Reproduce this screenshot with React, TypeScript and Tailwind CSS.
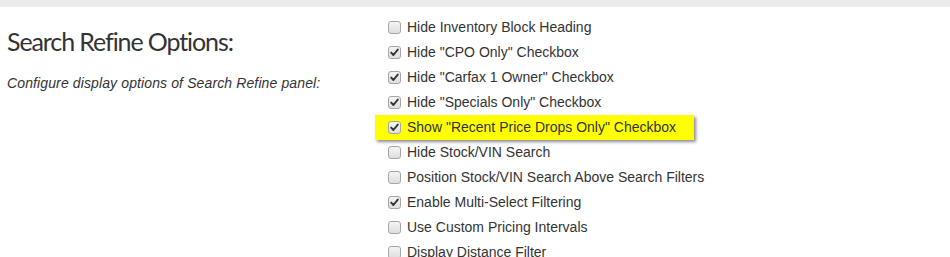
const options = [
  { label: "Hide Inventory Block Heading", checked: false },
  { label: 'Hide "CPO Only" Checkbox', checked: true },
  { label: 'Hide "Carfax 1 Owner" Checkbox', checked: true },
  { label: 'Hide "Specials Only" Checkbox', checked: true },
  { label: 'Show "Recent Price Drops Only" Checkbox', checked: true, highlight: true },
  { label: "Hide Stock/VIN Search", checked: false },
  { label: "Position Stock/VIN Search Above Search Filters", checked: false },
  { label: "Enable Multi-Select Filtering", checked: true },
  { label: "Use Custom Pricing Intervals", checked: false },
  { label: "Display Distance Filter", checked: false },
];

function Box({ checked }: { checked: boolean }) {
  return (
    <span className="flex h-[13px] w-[13px] shrink-0 items-center justify-center rounded-[3px] border border-[#a6a6a6] bg-gradient-to-b from-[#f4f4f4] to-[#dedede]">
      {checked && (
        <svg viewBox="0 0 11 11" className="h-[11px] w-[11px]">
          <path d="M2.2 5.6 L4.4 8 L8.8 2.6" fill="none" stroke="#333" strokeWidth="1.9" strokeLinecap="round" strokeLinejoin="round" />
        </svg>
      )}
    </span>
  );
}

export default function App() {
  return (
    <div className="h-[257px] w-[950px] overflow-hidden bg-white text-[#333]">
      <div className="h-[7px] bg-[#ebebeb]" />
      <div className="flex pt-[8px]">
        <div className="w-[388px] shrink-0 pl-[7px] pt-[11px]">
          <h2 className="font-['Lato',sans-serif] text-[25px] leading-[30px] tracking-[-1.1px] text-[#333]">
            Search Refine Options:
          </h2>
          <p className="mt-[18px] font-['Liberation_Sans',Arial,sans-serif] text-[14px] italic leading-[18px] tracking-[0.12px]">
            Configure display options of Search Refine panel:
          </p>
        </div>
        <div className="flex flex-col font-['Liberation_Sans',Arial,sans-serif] text-[14px]">
          {options.map((o) =>
            o.highlight ? (
              <div
                key={o.label}
                className="-ml-[13px] flex h-[25px] w-fit items-center gap-[6px] bg-[#ffff00] pl-[13px] pr-[18px] shadow-[2px_2px_3px_rgba(0,0,0,0.45)]"
              >
                <Box checked={o.checked} />
                <span>{o.label}</span>
              </div>
            ) : (
              <div key={o.label} className="flex h-[25px] items-center gap-[6px]">
                <Box checked={o.checked} />
                <span>{o.label}</span>
              </div>
            )
          )}
        </div>
      </div>
    </div>
  );
}
